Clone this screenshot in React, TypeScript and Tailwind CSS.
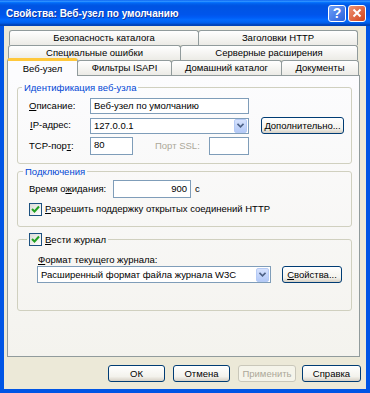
import React from "react";

const inputCls =
  "h-[16px] border border-[#7F9DB9] bg-white flex items-center px-[3px] text-[9.5px] leading-none text-black whitespace-nowrap overflow-hidden";

function Check() {
  return (
    <span className="w-[13px] h-[13px] shrink-0 border border-[#1C5180] bg-[linear-gradient(135deg,#DCDCD7,#FFFFFF)] flex items-center justify-center">
      <svg width="9" height="9" viewBox="0 0 9 9">
        <path d="M1 4 L3.5 6.5 L8 1.5" stroke="#21A121" strokeWidth="2" fill="none" />
      </svg>
    </span>
  );
}

function Arrow() {
  return (
    <span className="ml-auto w-[13px] h-[14px] shrink-0 rounded-[2px] bg-[linear-gradient(to_bottom,#D6E2FD,#B3C9F7)] border border-[#B6CBF5] flex items-center justify-center">
      <svg width="7" height="5" viewBox="0 0 7 5">
        <path d="M0.5 0.8 L3.5 3.8 L6.5 0.8" stroke="#4D6185" strokeWidth="1.6" fill="none" />
      </svg>
    </span>
  );
}

function Btn({ children, w, disabled }: { children: React.ReactNode; w: string; disabled?: boolean }) {
  return (
    <div
      className={
        (disabled
          ? "border-[#C9C7BA] text-[#ACA899] bg-[#F5F4EA] "
          : "border-[#003C74] text-black bg-[linear-gradient(to_bottom,#FFFFFF,#F3F2EC_70%,#D6D0C5)] ") +
        w +
        " h-[17px] border rounded-[3px] flex items-center justify-center text-[9.5px] leading-none"
      }
    >
      {children}
    </div>
  );
}

function Tab({ label, w, first }: { label: string; w: string; first?: boolean }) {
  return (
    <div
      className={
        (first ? "" : "-ml-px ") +
        w +
        " h-[15px] border border-b-0 border-[#919B9C] rounded-t-[3px] bg-[linear-gradient(to_bottom,#FFFFFF,#ECEBE6)] flex items-center justify-center text-[9.5px] leading-none text-black whitespace-nowrap"
      }
    >
      {label}
    </div>
  );
}

export default function App() {
  return (
    <div className="w-[370px] h-[393px] flex flex-col bg-[#0055E5] font-['Liberation_Sans',Arial,sans-serif] text-[9.5px] text-black select-none">
      {/* Title bar */}
      <div className="h-[26px] shrink-0 flex items-center pl-[6px] pr-[4px] bg-[linear-gradient(to_bottom,#0058EE_0%,#3593FF_4%,#288EFF_6%,#127DFF_8%,#036FFC_10%,#0262EE_14%,#0057E5_20%,#0054E3_24%,#0055EB_56%,#005BF5_66%,#026AFE_76%,#0062EF_86%,#0052D6_92%,#0040AB_96%,#0046C4_100%)]">
        <span className="text-white font-bold text-[10px] leading-none mt-[1px] [text-shadow:1px_1px_#1036A0]">
          Свойства: Веб-узел по умолчанию
        </span>
        <div className="ml-auto flex gap-[2px]">
          <div className="w-[18px] h-[17px] rounded-[3px] border border-white bg-[linear-gradient(135deg,#6EA0F8,#2A5FDB)] flex items-center justify-center text-white font-bold text-[14px] leading-none">
            ?
          </div>
          <div className="w-[18px] h-[17px] rounded-[3px] border border-white bg-[linear-gradient(135deg,#EE9274,#D2441B)] flex items-center justify-center">
            <svg width="10" height="10" viewBox="0 0 10 10">
              <path d="M1.5 1.5 L8.5 8.5 M8.5 1.5 L1.5 8.5" stroke="white" strokeWidth="2" />
            </svg>
          </div>
        </div>
      </div>

      {/* Body */}
      <div className="flex-1 mx-[4px] mb-[4px] bg-[#ECE9D8] flex flex-col pt-[4px]">
        {/* Tabs */}
        <div className="flex ml-[5px]">
          <Tab first label="Безопасность каталога" w="w-[190px]" />
          <Tab label="Заголовки HTTP" w="w-[160px]" />
        </div>
        <div className="flex ml-[4px]">
          <Tab first label="Специальные ошибки" w="w-[173px]" />
          <Tab label="Серверные расширения" w="w-[178px]" />
        </div>
        <div className="flex ml-[3px] h-[15px] items-end">
          <div className="relative z-10 -mb-px w-[71px] h-[18px] border border-b-0 border-[#919B9C] border-t-[3px] border-t-[#FFC83C] rounded-t-[3px] bg-[#FCFCFE] flex items-center justify-center text-[9.5px] leading-none">
            Веб-узел
          </div>
          <Tab label="Фильтры ISAPI" w="w-[95px]" />
          <Tab label="Домашний каталог" w="w-[111px]" />
          <Tab label="Документы" w="w-[78px]" />
        </div>

        {/* Panel */}
        <div className="ml-[3px] w-[353px] h-[282px] border border-[#919B9C] bg-[linear-gradient(to_bottom,#FCFCFE,#F4F3EE)] flex flex-col">
          {/* Group 1 */}
          <fieldset className="mt-[5px] ml-[9px] w-[335px] border border-[#D0D0BF] rounded-[3px] px-[4px]">
            <legend className="px-[2px] text-[#0046D5] leading-[13px]">Идентификация веб-узла</legend>
            <div className="pl-[7px] pt-[4px] pb-[8px] flex flex-col">
              <div className="flex items-center h-[16px]">
                <span className="w-[61px]">
                  <u>О</u>писание:
                </span>
                <div className={inputCls + " w-[159px]"}>Веб-узел по умолчанию</div>
              </div>
              <div className="flex items-center h-[17px] mt-[3px]">
                <span className="w-[61px] pl-px">
                  <u>I</u>P-адрес:
                </span>
                <div className="w-[159px] h-[16px] border border-[#7F9DB9] bg-white flex items-center pl-[3px] pr-px text-[9.5px] leading-none">
                  127.0.0.1
                  <Arrow />
                </div>
                <div className="ml-[12px]">
                  <Btn w="w-[83px]">
                    <u>Д</u>ополнительно...
                  </Btn>
                </div>
              </div>
              <div className="flex items-center h-[18px] mt-[3px]">
                <span className="w-[61px]">
                  TCP-пор<u>т</u>:
                </span>
                <div className={inputCls + " w-[43px] !h-[18px] items-start pt-[2px]"}>80</div>
                <span className="ml-[22px] w-[54px] text-[#ACA899]">Порт SSL:</span>
                <div className="w-[40px] h-[18px] border border-[#7F9DB9] bg-white" />
              </div>
            </div>
          </fieldset>

          {/* Group 2 */}
          <fieldset className="mt-[1px] ml-[9px] w-[335px] border border-[#D0D0BF] rounded-[3px] px-[4px]">
            <legend className="px-[2px] text-[#0046D5] leading-[13px] ml-px">Подключения</legend>
            <div className="pl-[7px] pt-[2px] pb-[10px] flex flex-col">
              <div className="flex items-center h-[18px]">
                <span className="w-[84px] whitespace-nowrap">
                  Время о<u>ж</u>идания:
                </span>
                <div className={inputCls + " w-[78px] !h-[18px] justify-end"}>900</div>
                <span className="ml-[4px]">с</span>
              </div>
              <div className="flex items-center mt-[5px] h-[13px]">
                <Check />
                <span className="ml-[3px] whitespace-nowrap">
                  <u>Р</u>азрешить поддержку открытых соединений HTTP
                </span>
              </div>
            </div>
          </fieldset>

          {/* Group 3 */}
          <fieldset className="mt-[6px] ml-[9px] w-[335px] border border-[#D0D0BF] rounded-[3px] px-[4px]">
            <legend className="ml-[5px] px-[2px] leading-[13px] flex items-center h-[13px]">
              <Check />
              <span className="ml-[3px]">
                <u>В</u>ести журнал
              </span>
            </legend>
            <div className="pl-[15px] pt-[7px] pb-[27px] flex flex-col">
              <span className="leading-[13px] ml-px">
                <u>Ф</u>ормат текущего журнала:
              </span>
              <div className="flex items-center h-[17px]">
                <div className="w-[234px] h-[17px] border border-[#7F9DB9] bg-white flex items-center pl-[3px] pr-px text-[9.5px] leading-none whitespace-nowrap">
                  Расширенный формат файла журнала W3C
                  <Arrow />
                </div>
                <div className="ml-[11px]">
                  <Btn w="w-[60px]">
                    <u>С</u>войства...
                  </Btn>
                </div>
              </div>
            </div>
          </fieldset>
        </div>

        {/* Buttons */}
        <div className="flex justify-end pr-[5px] mt-[8px]">
          <Btn w="w-[57px]">ОК</Btn>
          <div className="ml-[8px]">
            <Btn w="w-[57px]">Отмена</Btn>
          </div>
          <div className="ml-[8px]">
            <Btn w="w-[58px]" disabled>
              Применить
            </Btn>
          </div>
          <div className="ml-[6px]">
            <Btn w="w-[59px]">Справка</Btn>
          </div>
        </div>
      </div>
    </div>
  );
}
